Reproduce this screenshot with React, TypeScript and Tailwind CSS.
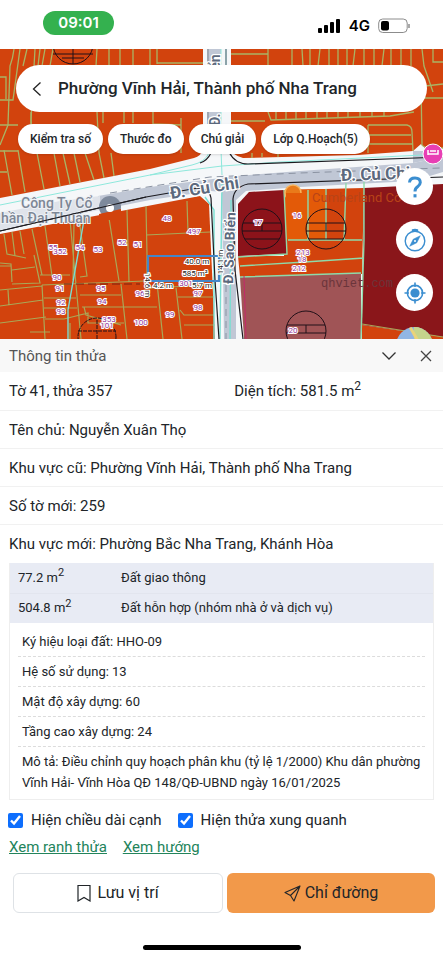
import { useState } from 'react';

const fields = [
  'Tên chủ: Nguyễn Xuân Thọ',
  'Khu vực cũ: Phường Vĩnh Hải, Thành phố Nha Trang',
  'Số tờ mới: 259',
];

const planning = ['Ký hiệu loại đất: HHO-09', 'Hệ số sử dụng: 13', 'Mật độ xây dựng: 60', 'Tầng cao xây dựng: 24'];

// parcel numbers: [text, x, y]
const parcels: [string, number, number][] = [
  ['48', 167, 221], ['497', 194, 234], ['51', 138, 247], ['52', 122, 245], ['53', 98, 252],
  ['54', 80, 250], ['55', 53, 250], ['352', 60, 254], ['90', 57, 280], ['91', 60, 291],
  ['92', 61, 305], ['93', 61, 314], ['95', 101, 291], ['94', 102, 304], ['96', 140, 296],
  ['99', 170, 317], ['98', 198, 310], ['97', 198, 296], ['301', 186, 286], ['100', 141, 325],
  ['353', 109, 322], ['101', 107, 328], ['17', 258, 225], ['16', 297, 218], ['213', 303, 255],
  ['18', 302, 262], ['212', 299, 271], ['20', 293, 333],
];

const measures: [string, number, number, number][] = [
  ['40.0 m', 197, 264, 0],
  ['585 m²', 195, 276, 0],
  ['4.2 m', 163, 288, 0],
  ['5.7 m', 202, 288, 0],
  ['14.6 m', 145, 285, 90],
  ['14.1 m', 223, 262, -90],
];

function Stamp({ x, y, r }: { x: number; y: number; r: number }) {
  return (
    <g stroke="#201018" strokeWidth="1" fill="none">
      <circle cx={x} cy={y} r={r} />
      <path d={`M${x - r + 1} ${y - 6}H${x + r - 1}M${x - r} ${y + 2}H${x + r}M${x - r + 3} ${y + 10}H${x + r - 3}M${x} ${y - 6}V${y + 2}`} />
    </g>
  );
}

function PlanMap() {
  return (
    <svg viewBox="0 49 443 290" preserveAspectRatio="xMidYMid slice" className="absolute inset-0 h-full w-full" aria-hidden="true">
      <rect y="49" width="443" height="290" fill="#f5f7f9" />
      {/* streets */}
      <path d="M98 196L150 187L236 176L300 171L413 163L443 157V172L413 181L300 187L246 191L236 200V339H224L222 192L211 191L150 200L100 210Z" fill="#c0c7d5" />
      <path d="M413 151H423L428 160L413 163Z" fill="#c0c7d5" />
      <path d="M0 213L60 201L100 196V210L0 230Z" fill="#dfe3ea" />
      <path d="M209 49H221V153H209Z" fill="#c0c7d5" />
      <path d="M221 49V150L222 175M209 153Q205 162 192 165L150 175L0 205" stroke="#8ee8dc" fill="none" />
      <path d="M226 49V110M222 128H226M150 175L222 166L280 162L443 154" stroke="#8ee8dc" fill="none" />
      <path d="M110 193L210 177L300 173L440 168" stroke="#8c94a3" strokeDasharray="7 5" fill="none" />
      <path d="M226 340V285" stroke="#8c94a3" strokeDasharray="7 5" />

      {/* land blocks */}
      <g fill="#d2430d">
        <path d="M0 49H203V150Q201 156 194 158L150 169L0 198Z" />
        <path d="M231 49H443V148H425L421 144L413 151L358 155L243 158Q231 155 231 147Z" />
        <path d="M0 234L200 196L209 204L215 339H0Z" />
        <path d="M284 190L364 188L362 274L240 277L238 256H284Z" />
        <path d="M362 325L443 337V339H362Z" />
      </g>
      <path d="M238 204L249 192L284 190L287 254L238 256Z" fill="#8c131a" />
      <path d="M364 188L443 184V337L362 325Z" fill="#8a161a" />
      <path d="M240 277L361 273V339H244Z" fill="#a05456" />
      <path d="M284 190L325 189V240H286Z" fill="#e35a08" />

      {/* parcel edges */}
      <g stroke="#a9b465" strokeWidth="1.3" fill="none">
        <path d="M14 49Q13 58 10 66L8 125L0 145M20 49L13 100H0M35 49L31 120L33 150M27 49L23 66M40 49L38 66M45 49L42 66M53 49L50 66M97 49L96 66M109 49V66M120 49V66M133 49V66M157 49V64M150 49V66M157 63H203" />
        <path d="M0 77H6V99M31 112L31 152M97 112L99 153L104 178M103 112V123M124 112V123M133 112V123M153 112V124L181 125M181 118V153M0 125H18M0 151H18" />
        <path d="M4 150L12 195M18 150L25 192M37 153L44 189M54 153L60 186M63 153L70 184M74 153L80 182M85 153L94 180M111 153L114 176M0 172H7" />
        <path d="M231 54H268M268 49V66M231 121H265M268 112L271 120L390 116L414 112M292 49V66M302 49L303 66M310 49V66M320 49L318 66M329 49V66M338 49V66M347 49V66M355 49L353 66M364 49V66M374 49V66M384 49L382 66M391 49V66M401 49V66M411 49V66M422 49L424 66L433 92M433 49V62H443" />
        <path d="M276 112V120M286 112V120M296 112V120M306 112V119M317 112V119M327 112V118M338 112V118M348 112V118M360 112V117M372 112V117M384 112V116M368 125H407Q412 126 412 132L413 151M368 125V153M368 135H411M368 144H413M421 82L422 145Q424 149 443 148M425 86L443 84M421 98H443M252 153V158M262 153V157M278 153V157" />
      </g>
      <g stroke="#a9a858" strokeWidth="1.2" fill="none">
        <path d="M4 234L7 254L26 258M12 232L15 256M20 231L24 254M32 229L42 275M45 226L52 276M0 263L11 264L12 282M12 270L35 267M0 266H11M34 255L40 283L12 284M40 275H70M42 285L145 281M42 285L45 339M70 220L81 339M79 219L87 276L80 277M74 222L73 280M108 212L119 281M127 210L129 282M146 206L147 255M146 235L210 232M187 201L188 233M147 255V283M44 298H76M44 308H77M0 306L43 300M0 290L42 286M8 290L9 305M0 323L46 317M80 295H121M82 307H157M121 284L127 339M84 307L86 315L121 325M157 283L163 339M176 288L182 339M147 288L213 285M178 297H214M180 310L184 315H214M184 325H215M45 319H64L88 313V323H124M30 332H50M70 323V339" />
        <path d="M362 324L443 337" />
      </g>
      <g stroke="#8edaa9" strokeWidth="1.4" fill="none">
        <path d="M284 190L287 254L238 257M288 240H362M308 190V240M326 189V240M346 183L344 240M364 182V240L361 339M364 258L305 262L240 266M240 277L361 273" />
        <path d="M231 200L230 339M222 180L220 339M84 220L68 310V339M205 197L214 210V339" stroke="#79dfd2" />
      </g>
      <path d="M244 276L246 339" stroke="#c32b6b" fill="none" />

      {/* planning boundary */}
      <g stroke="#1c1b20" strokeWidth="1.2" fill="none">
        <path d="M0 231L146 197L198 188Q210 189 211 198L215 280L219 339" />
        <path d="M229 152Q235 164 248 164L443 157M443 177L248 184Q234 187 233 199L235 270L243 339" />
        <path d="M200 163Q207 161 211 153" />
        <path d="M208 49V152M226 49V66" stroke="#68717f" />
      </g>
      <g stroke="#201018" fill="none">
        <circle cx="73" cy="44" r="20" />
        <path d="M53 54H93M73 49V64M62 58H84" />
      </g>
      <Stamp x={262} y={229} r={20} />
      <Stamp x={326} y={229} r={20} />
      <Stamp x={306} y={331} r={20} />
      <g stroke="#201018" fill="none" strokeDasharray="4 1">
        <circle cx="97" cy="337" r="19" />
        <path d="M78 331H116M97 320V339" />
      </g>
      <path d="M64 284H140" stroke="#7a2110" strokeDasharray="8 4" />

      {/* street and place names */}
      <g fontFamily="Roboto, sans-serif" fontSize="17" fontWeight="700" fill="#5c697d" stroke="#fff" strokeWidth="2.5" paintOrder="stroke">
        <text transform="translate(171 199) rotate(-9)">Đ. Củ Chi</text>
        <text transform="translate(341 181) rotate(-2)">Đ. Củ Chi</text>
        <text transform="translate(233 284) rotate(-88)" fontSize="14">Đ. Sao Biển</text>
        <text transform="translate(220 126) rotate(-90)" fontSize="14">Đ. Sao Biển</text>
      </g>
      <g fontFamily="Roboto, sans-serif" fontSize="14" fontWeight="500" fill="#7d8796" stroke="#eef1f5" strokeWidth="2" paintOrder="stroke">
        <text x="21" y="208">Công Ty Cổ</text>
        <text x="1" y="223">hần Đại Thuận</text>
      </g>
      <circle cx="110" cy="207" r="11" fill="#7e8a9c" />
      <path d="M99 214L121 209V220H99Z" fill="#d2430d" />
      <circle cx="110" cy="208" r="4" fill="#fff" />
      <path d="M0 231L146 197" stroke="#1c1b20" strokeWidth="1.2" />
      <g>
        <circle cx="293" cy="193" r="8" fill="#e97a1a" stroke="#f5b45e" strokeWidth="1.5" />
        <path d="M286 193H302V203H286Z" fill="#e35a08" />
      </g>
      <circle cx="433" cy="154" r="10" fill="#e83fb4" stroke="#fff" />
      <path d="M428 155V150M428 154H438V150M430 151H436" stroke="#fff" strokeWidth="1.5" fill="none" />
      <text x="321" y="287" fontSize="12" fontFamily="Liberation Mono, monospace" fill="#6b353b">qhviet.com</text>
      <text x="312" y="202" fontSize="13" fontFamily="Roboto, sans-serif" fill="#b84317">Cumberland Co</text>

      {/* selected parcel */}
      <path d="M148 285V256H219V281H148" fill="none" stroke="#4586c7" strokeWidth="2.2" />
      <g fontFamily="Roboto, sans-serif" fontSize="8" textAnchor="middle" fill="#93369c" stroke="#fff" strokeWidth="2" paintOrder="stroke">
        {parcels.map(([label, x, y]) => (
          <text key={label} x={x} y={y}>{label}</text>
        ))}
      </g>
      <g fontFamily="Roboto, sans-serif" fontSize="8" textAnchor="middle" fill="#1d1d22" stroke="#fff" strokeWidth="2.2" paintOrder="stroke">
        {measures.map(([label, x, y, angle]) => (
          <text key={label} transform={`translate(${x} ${y}) rotate(${angle})`}>{label}</text>
        ))}
      </g>
    </svg>
  );
}

function StatusBar() {
  return (
    <div className="flex h-[49px] items-start justify-between pr-[33px] pl-[43px]">
      <div className="mt-[11px] flex h-6 w-[71px] items-center justify-center rounded-full bg-[#34b14f] text-[15px] font-semibold text-white font-[Inter,sans-serif]">
        09:01
      </div>
      <div className="mt-4 flex h-5 items-center gap-2">
        <svg width="24" height="14" viewBox="0 0 24 14" aria-hidden="true">
          <rect x="1" y="9" width="4" height="5" rx="1" />
          <rect x="7" y="6" width="4" height="8" rx="1" />
          <rect x="13" y="3" width="4" height="11" rx="1" />
          <rect x="19" y="0" width="4" height="14" rx="1" />
        </svg>
        <span className="text-[15px] font-semibold text-black font-[Inter,sans-serif]">4G</span>
        <svg width="32" height="16" viewBox="0 0 32 16" aria-hidden="true">
          <rect x="0.7" y="1" width="28.5" height="13.5" rx="4" fill="#fff" stroke="#8c8c8c" />
          <rect x="3" y="3" width="8" height="9.5" rx="2" />
          <path d="M31 6V10" stroke="#8c8c8c" strokeWidth="1.5" />
        </svg>
      </div>
    </div>
  );
}

export default function App() {
  const [showEdges, setShowEdges] = useState(true);
  const [showAround, setShowAround] = useState(true);

  return (
    <div className="flex min-h-screen flex-col bg-white text-[#212529] font-[Roboto,sans-serif]">
      <StatusBar />

      <section className="relative h-[290px] overflow-hidden">
        <PlanMap />
        <div className="relative px-4 pt-4">
          <div className="flex h-[47px] items-center rounded-full bg-white pl-4">
            <button aria-label="Quay lại">
              <svg width="10" height="16" viewBox="0 0 10 16" fill="none" stroke="#222" strokeWidth="1.3">
                <path d="M8.5 1.5L1.5 8L8.5 14.5" />
              </svg>
            </button>
            <h1 className="ml-4 text-[17px] font-medium">Phường Vĩnh Hải, Thành phố Nha Trang</h1>
          </div>
          <div className="mt-3 ml-[2px] flex gap-[5px] text-xs font-medium">
            <button className="h-[30px] rounded-2xl bg-white px-3 shadow-sm">Kiểm tra số</button>
            <button className="h-[30px] rounded-2xl bg-white px-3 shadow-sm">Thước đo</button>
            <button className="h-[30px] rounded-2xl bg-white px-3 shadow-sm">Chú giải</button>
            <button className="h-[30px] rounded-2xl bg-white px-3 shadow-sm">Lớp Q.Hoạch(5)</button>
          </div>
        </div>

        {/* floating map controls */}
        <div className="absolute top-[119px] right-[10px] flex flex-col gap-4 text-[#3b8ed0]">
          <button aria-label="Trợ giúp" className="flex size-[37px] items-center justify-center rounded-full bg-white">
            <svg width="22" height="26" viewBox="0 0 22 26" fill="none" stroke="currentColor" strokeWidth="3">
              <path d="M5.5 8.5Q5.8 4 11 4Q16.3 4 16.3 8.5Q16.3 10.5 13.5 12.8Q11 14.6 11 17.5" />
              <path d="M11 20.2V23.4" />
            </svg>
          </button>
          <button aria-label="La bàn" className="flex size-[37px] items-center justify-center rounded-full bg-white">
            <svg width="24" height="24" viewBox="0 0 24 24" fill="none" stroke="currentColor" strokeWidth="1.4">
              <circle cx="12" cy="13" r="9.8" />
              <path d="M9.5 2Q12 0.8 14.5 2V3H9.5Z" fill="currentColor" />
              <path d="M17.3 7.7L13.8 14.8L6.7 18.3L10.2 11.2Z" fill="currentColor" strokeWidth="0.5" />
              <circle cx="12" cy="13" r="1" fill="#fff" stroke="none" />
            </svg>
          </button>
          <button aria-label="Vị trí của tôi" className="flex size-[37px] items-center justify-center rounded-full bg-white">
            <svg width="24" height="24" viewBox="0 0 24 24" fill="none" stroke="currentColor" strokeWidth="1.6">
              <circle cx="12" cy="12" r="7.6" />
              <circle cx="12" cy="12" r="4.6" fill="currentColor" stroke="none" />
              <path d="M12 1.5V6M12 18V22.5M1.5 12H6M18 12H22.5" />
            </svg>
          </button>
          <button aria-label="Lớp bản đồ" className="size-[37px] overflow-hidden rounded-full">
            <svg width="37" height="37" viewBox="0 0 37 37">
              <rect width="37" height="37" fill="#91b6e4" />
              <path d="M18 0H37V37H22L18 10Z" fill="#c5d48c" />
              <path d="M14 0L22 14" stroke="#ead37a" strokeWidth="3" />
            </svg>
          </button>
        </div>
      </section>

      <main className="text-[15px] leading-6">
        <div className="flex h-[33px] items-center bg-[#f8f8f8] pr-[11px] pl-[9px] text-[#555]">
          <h2 className="flex-1">Thông tin thửa</h2>
          <button aria-label="Thu gọn" className="mr-6">
            <svg width="14" height="8" viewBox="0 0 14 8" fill="none" stroke="#333" strokeWidth="1.3">
              <path d="M0.5 0.5L7 7L13.5 0.5" />
            </svg>
          </button>
          <button aria-label="Đóng">
            <svg width="12" height="12" viewBox="0 0 12 12" fill="none" stroke="#444" strokeWidth="1.3">
              <path d="M1 1L11 11M11 1L1 11" />
            </svg>
          </button>
        </div>

        <div className="flex h-[39px] items-center border-b border-[#f1f1f1] px-[9px]">
          <p className="w-[53%]">Tờ 41, thửa 357</p>
          <p>Diện tích: 581.5 m<sup className="text-xs">2</sup></p>
        </div>
        {fields.map((text) => (
          <p key={text} className="h-[38px] border-b border-[#f1f1f1] px-[9px] py-[7px]">{text}</p>
        ))}
        <p className="px-[9px] pt-[7px] pb-[7px]">Khu vực mới: Phường Bắc Nha Trang, Khánh Hòa</p>

        <div className="mx-[9px] border border-t-0 border-[#eeeeee] text-[13px]">
          <table className="w-full bg-[#e8ebf4] text-left">
            <tbody>
              <tr className="h-[30px] border-b border-[#e2e5ee]">
                <td className="w-[103px] pl-2">77.2 m<sup className="text-[11px]">2</sup></td>
                <td className="pl-2">Đất giao thông</td>
              </tr>
              <tr className="h-[30px]">
                <td className="pl-2">504.8 m<sup className="text-[11px]">2</sup></td>
                <td className="pl-2">Đất hỗn hợp (nhóm nhà ở và dịch vụ)</td>
              </tr>
            </tbody>
          </table>
          <div className="px-2 pt-1 pb-[2px]">
            {planning.map((text) => (
              <p key={text} className="flex h-[30px] items-center border-b border-dashed border-[#dcdcdc] px-1">{text}</p>
            ))}
            <p className="py-1 pl-1 leading-[21px]">
              Mô tả: Điều chỉnh quy hoạch phân khu (tỷ lệ 1/2000) Khu dân phường Vĩnh Hải- Vĩnh Hòa QĐ 148/QĐ-UBND ngày 16/01/2025
            </p>
          </div>
        </div>

        <div className="flex gap-4 px-2 pt-2">
          <label className="flex items-center gap-2">
            <input type="checkbox" className="size-[15px] accent-[#0d6efd]" checked={showEdges} onChange={(e) => setShowEdges(e.target.checked)} />
            Hiện chiều dài cạnh
          </label>
          <label className="flex items-center gap-2">
            <input type="checkbox" className="size-[15px] accent-[#0d6efd]" checked={showAround} onChange={(e) => setShowAround(e.target.checked)} />
            Hiện thửa xung quanh
          </label>
        </div>
        <div className="flex gap-4 px-[9px] pt-[3px] text-[#23845b] underline">
          <a href="#ranh">Xem ranh thửa</a>
          <a href="#huong">Xem hướng</a>
        </div>
      </main>

      <div className="flex gap-1 pt-[14px] pr-2 pl-[13px] text-base">
        <button className="flex h-10 flex-1 items-center justify-center gap-[6px] rounded-md border border-[#dee2e6]">
          <svg width="14" height="18" viewBox="0 0 14 18" fill="none" stroke="currentColor" strokeWidth="1.2">
            <path d="M1 1.5H13V17L7 13.5L1 17Z" />
          </svg>
          Lưu vị trí
        </button>
        <button className="flex h-10 flex-1 items-center justify-center gap-1 rounded-md bg-[#f2994a]">
          <svg width="17" height="17" viewBox="0 0 17 17" fill="none" stroke="currentColor" strokeWidth="1.1" strokeLinejoin="round">
            <path d="M16 1L1 7.5L6.5 10.5L10 16ZM16 1L6.5 10.5" />
          </svg>
          Chỉ đường
        </button>
      </div>
      <div className="mx-auto mt-8 h-[5px] w-[158px] rounded-full bg-black" />
    </div>
  );
}
